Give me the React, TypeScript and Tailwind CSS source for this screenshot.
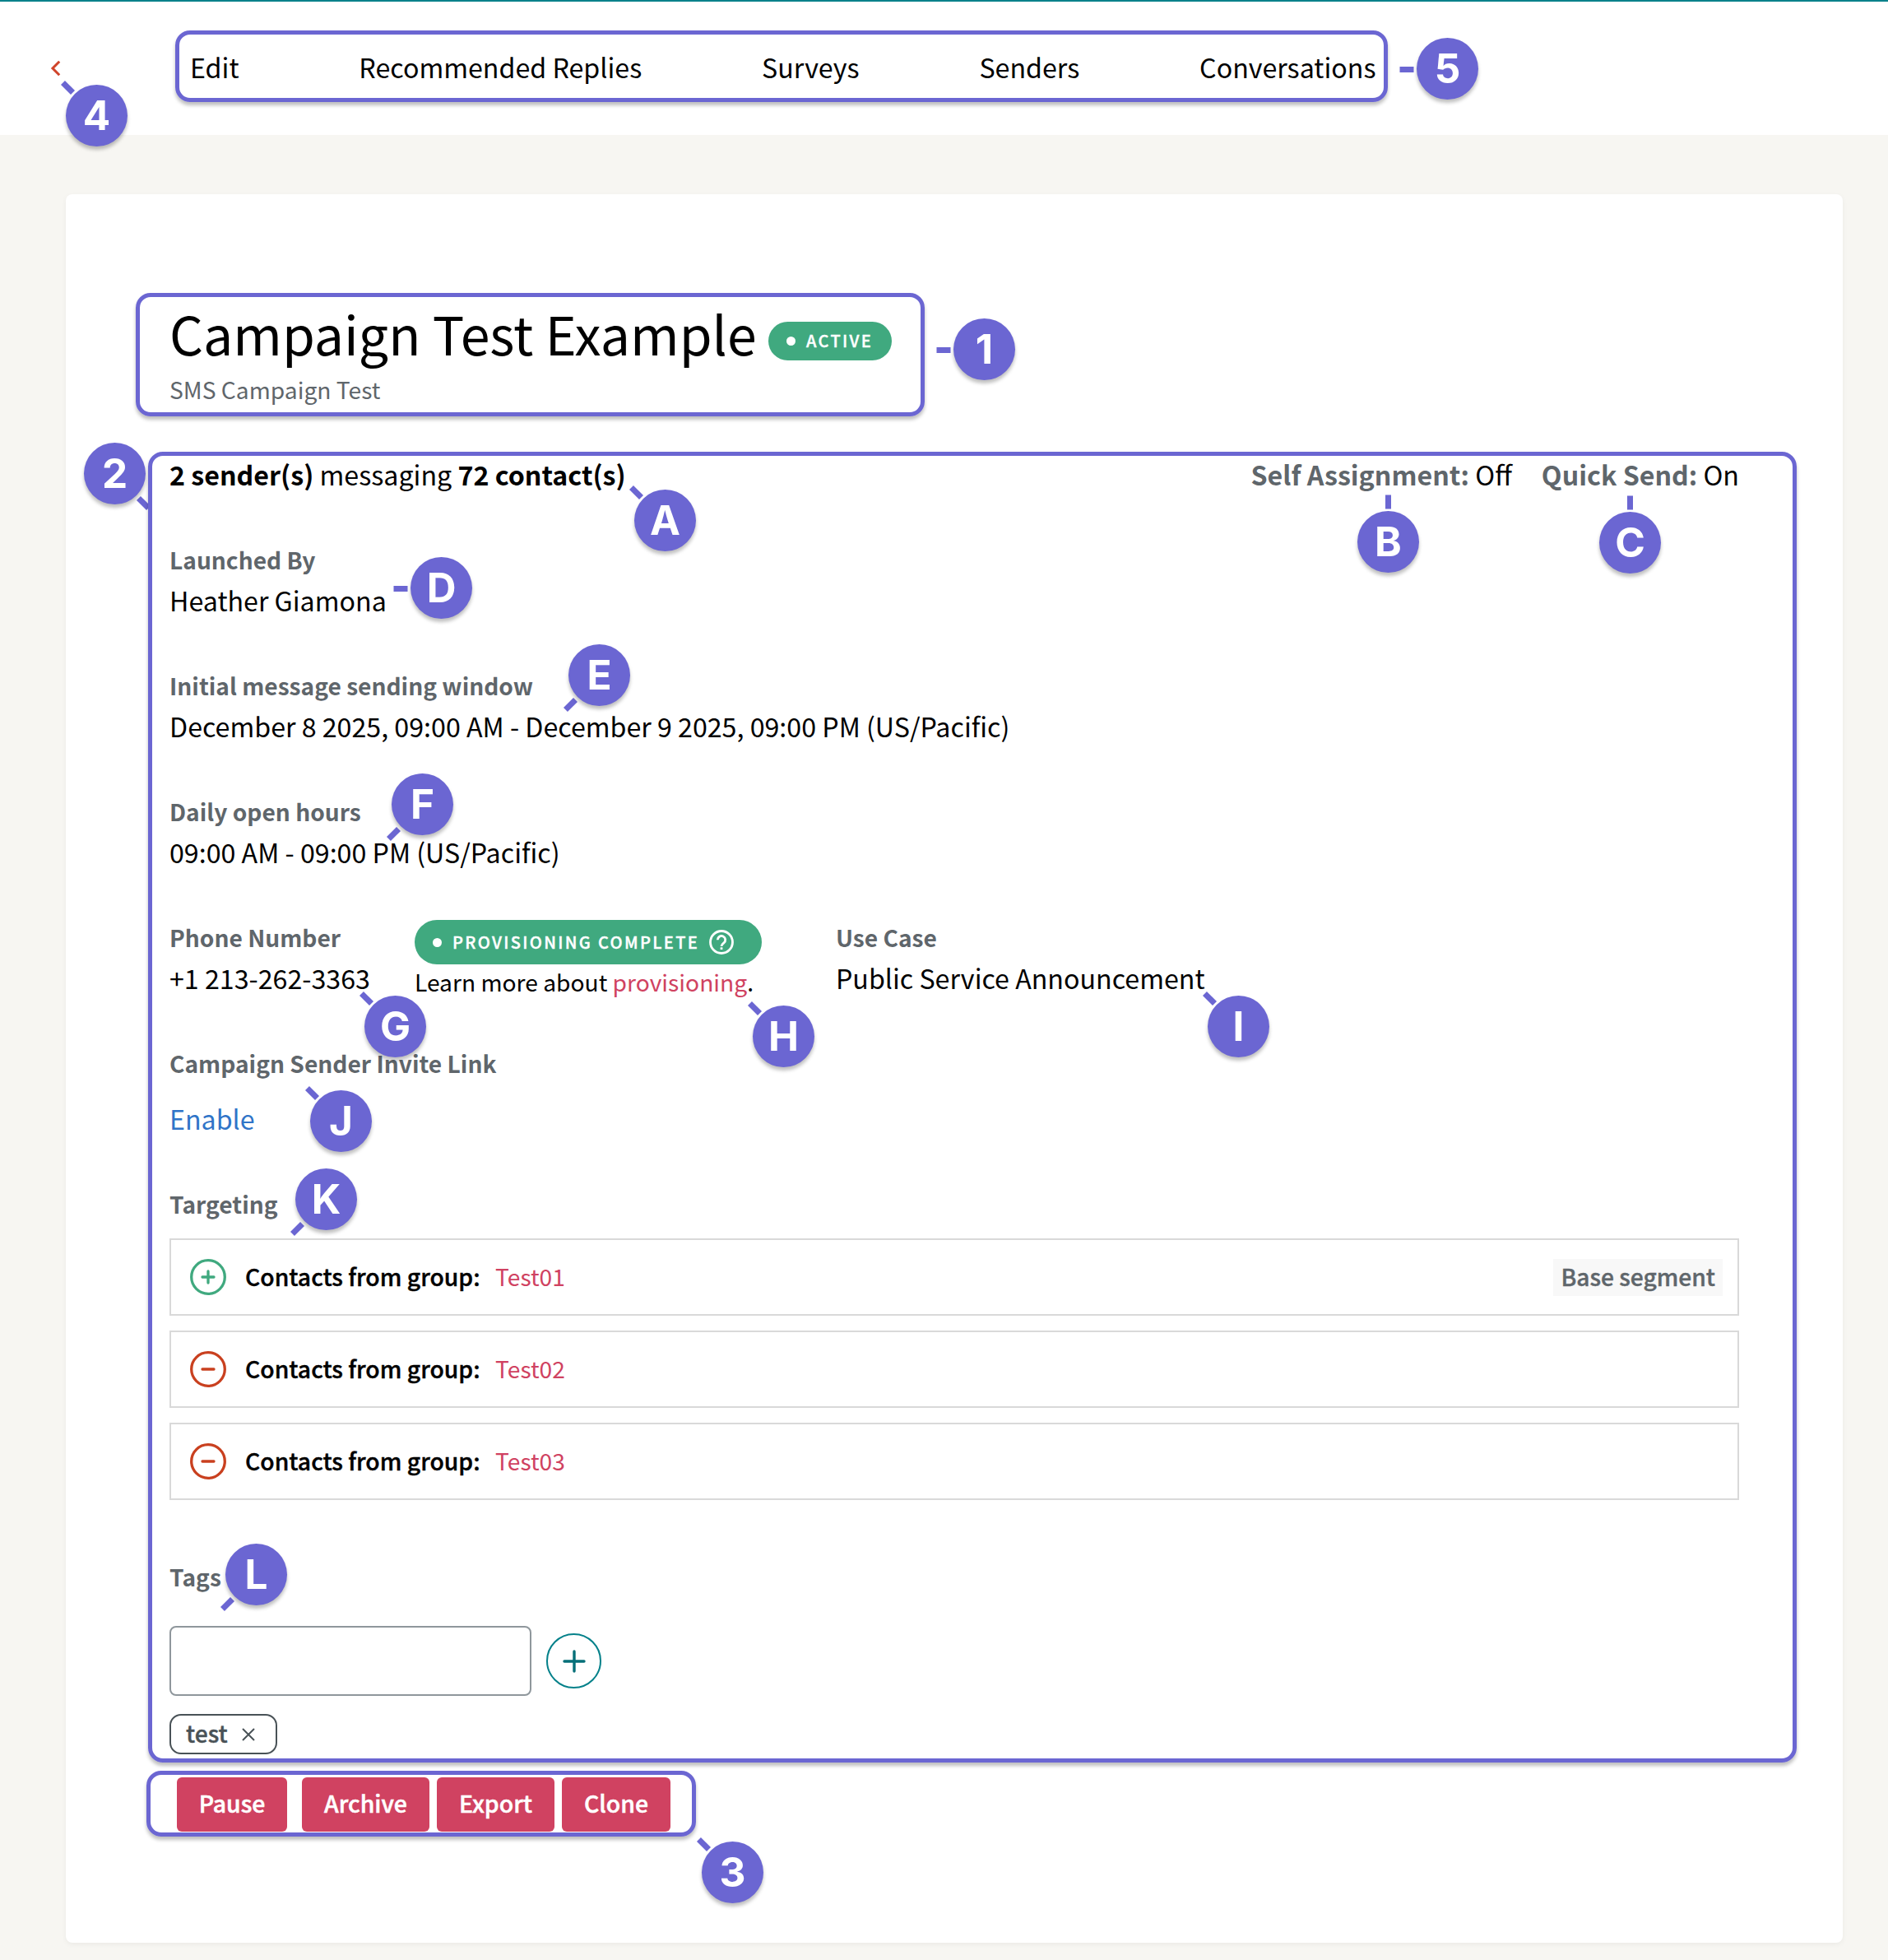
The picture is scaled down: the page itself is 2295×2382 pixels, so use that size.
import type { ReactNode } from "react";

const navItems = ["Edit", "Recommended Replies", "Surveys", "Senders", "Conversations"];

const segments = [
  { name: "Test01", included: true, base: true },
  { name: "Test02", included: false, base: false },
  { name: "Test03", included: false, base: false },
];

// x / y are the centre of the marker, angle is where its pointer sits
const markers = [
  { label: "4", x: 117.5, y: 140.5, angle: 225 },
  { label: "5", x: 1759.5, y: 83.5, angle: 180 },
  { label: "1", x: 1196.5, y: 424.5, angle: 180 },
  { label: "2", x: 139.5, y: 575.5, angle: 45 },
  { label: "A", x: 808.5, y: 632.5, angle: 225 },
  { label: "B", x: 1687.5, y: 658.5, angle: 270 },
  { label: "C", x: 1981.5, y: 659.5, angle: 270 },
  { label: "D", x: 536.5, y: 714.5, angle: 180 },
  { label: "E", x: 728.5, y: 820.5, angle: 135 },
  { label: "F", x: 513.5, y: 977.5, angle: 135 },
  { label: "G", x: 480.5, y: 1247.5, angle: 225 },
  { label: "H", x: 952.5, y: 1259.5, angle: 225 },
  { label: "I", x: 1505.5, y: 1247.5, angle: 225 },
  { label: "J", x: 414.5, y: 1362.5, angle: 225 },
  { label: "K", x: 396.5, y: 1457.5, angle: 135 },
  { label: "L", x: 311.5, y: 1913.5, angle: 135 },
  { label: "3", x: 890.5, y: 2275.5, angle: 225 },
];

export default function App() {
  return (
    <main className="relative h-[2382px] w-[2295px] overflow-hidden bg-[#f7f6f2] font-['Noto_Sans_CJK_SC',sans-serif] text-[32.2px] leading-[48px] text-black">
      <header className="flex h-[164px] items-start border-t-2 border-[#05818a] bg-white">
        <svg className="mt-[71px] ml-[61px] h-5 w-3.5" viewBox="0 0 14 20" fill="none">
          <path d="M11.2 1.8 3 10l8.2 8.2" stroke="#d0442a" strokeWidth="3" />
        </svg>
        <nav className="mt-[55px] ml-[156px] flex gap-[145.8px] whitespace-nowrap">
          {navItems.map((item) => (
            <a key={item}>{item}</a>
          ))}
        </nav>
      </header>

      <section className="mt-[72px] ml-20 h-[2125px] w-[2160px] rounded-lg bg-white px-[126px] pt-[128px] shadow-[0_2px_6px_rgba(0,0,0,0.05)]">
        <div className="flex h-20 items-center whitespace-nowrap">
          <h1 className="w-[728px] text-[64.4px] leading-[80px]">Campaign Test Example</h1>
          <div className="mt-[21px] flex h-[47px] w-[150px] items-center rounded-full bg-[#40a97f] pl-[22px] text-white">
            <Dot />
            <BadgeText>ACTIVE</BadgeText>
          </div>
        </div>
        <p className="mt-[7px] text-[28.2px] leading-[44px] text-[#5f666b]">SMS Campaign Test</p>

        <div className="mt-[57px] flex justify-between whitespace-nowrap">
          <p>
            <b>2 sender(s)</b> messaging <b>72 contact(s)</b>
          </p>
          <div className="flex gap-9">
            <p>
              <b className="text-[#5f666b]">Self Assignment:</b> Off
            </p>
            <p>
              <b className="text-[#5f666b]">Quick Send:</b> On
            </p>
          </div>
        </div>

        <div className="mt-[55px] flex flex-col gap-[55px] whitespace-nowrap">
          <Field label="Launched By">Heather Giamona</Field>
          <Field label="Initial message sending window">
            December 8 2025, 09:00 AM - December 9 2025, 09:00 PM (US/Pacific)
          </Field>
          <Field label="Daily open hours">09:00 AM - 09:00 PM (US/Pacific)</Field>

          <div className="flex">
            <div className="w-[298px]">
              <Field label="Phone Number">+1 213-262-3363</Field>
            </div>
            <div className="w-[512px] pt-1">
              <div className="flex h-[54px] w-[422px] items-center rounded-full bg-[#40a97f] pl-[22px] text-white">
                <Dot />
                <BadgeText>PROVISIONING COMPLETE</BadgeText>
                <HelpIcon />
              </div>
              <p className="-mt-px h-0 text-[28.2px] leading-[44px]">
                Learn more about <a className="text-[#d04261]">provisioning</a>.
              </p>
            </div>
            <Field label="Use Case">Public Service Announcement</Field>
          </div>

          <div>
            <FieldLabel>Campaign Sender Invite Link</FieldLabel>
            <a className="mt-[18px] block text-[#2f74c8]">Enable</a>
          </div>
        </div>

        <div className="mt-[55px]">
          <FieldLabel>Targeting</FieldLabel>
          <ul className="mt-[17px] flex flex-col gap-[18px]">
            {segments.map((segment) => (
              <li
                key={segment.name}
                className="flex h-[94px] items-center border-2 border-[#d9d9d9] pr-[18px] pl-[23px] text-[28.2px]"
              >
                <SegmentIcon included={segment.included} />
                <span className="-mt-0.5 ml-[23px] w-[304px] text-[28.3px] font-medium [-webkit-text-stroke:0.4px]">
                  Contacts from group:
                </span>
                <a className="-mt-0.5 text-[#d04261]">{segment.name}</a>
                {segment.base && (
                  <span className="ml-auto h-[45px] bg-[#f8f8f8] px-[9px] leading-[42px] font-medium text-[#5f666b] [-webkit-text-stroke:0.4px]">
                    Base segment
                  </span>
                )}
              </li>
            ))}
          </ul>
        </div>

        <div className="mt-[68px]">
          <FieldLabel>Tags</FieldLabel>
          <div className="mt-[35px] flex items-center gap-[18px]">
            <input className="h-[85px] w-[440px] rounded-lg border-2 border-[#8f979c] px-4" />
            <button className="flex size-[67px] items-center justify-center rounded-full border-2 border-[#05818a]">
              <svg
                className="size-7"
                viewBox="0 0 28 28"
                stroke="#056f78"
                strokeWidth="3.4"
                strokeLinecap="round"
              >
                <path d="M14 2v24M2 14h24" />
              </svg>
            </button>
          </div>
          <div className="mt-[22px] flex h-[49px] w-[131px] items-center rounded-[14px] border-2 border-[#495257] pl-[18px] text-[28.2px] font-medium text-[#495257]">
            <span className="-mt-[3px] [-webkit-text-stroke:0.4px]">test</span>
            <svg className="ml-[17px] size-4" viewBox="0 0 16 16" stroke="#495257" strokeWidth="2">
              <path d="M1 1l14 14M15 1 1 15" />
            </svg>
          </div>
        </div>

        <div className="mt-7 ml-[9px] flex text-[28.4px] font-medium text-white">
          <ActionButton className="mr-[18px] w-[134px]">Pause</ActionButton>
          <ActionButton className="mr-[9px] w-[155px]">Archive</ActionButton>
          <ActionButton className="mr-[9px] w-[143px]">Export</ActionButton>
          <ActionButton className="w-[132px]">Clone</ActionButton>
        </div>
      </section>

      {/* annotations drawn over the page */}
      <div className="pointer-events-none absolute inset-0">
        <Outline className="top-[37px] left-[213px] h-[87px] w-[1474px]" />
        <Outline className="top-[356px] left-[165px] h-[150px] w-[959px]" />
        {markers.map((marker) => (
          <Marker key={marker.label} {...marker} />
        ))}
        <Outline className="top-[549px] left-[180px] h-[1593px] w-[2004px]" />
        <Outline className="top-[2152px] left-[178px] h-20 w-[668px]" />
      </div>
    </main>
  );
}

function FieldLabel({ children }: { children: ReactNode }) {
  return <h2 className="text-[28.15px] leading-[50px] font-bold text-[#5f666b]">{children}</h2>;
}

function Field({ label, children }: { label: string; children: ReactNode }) {
  return (
    <div>
      <FieldLabel>{label}</FieldLabel>
      <p>{children}</p>
    </div>
  );
}

function ActionButton({ className, children }: { className: string; children: ReactNode }) {
  return (
    <button
      className={`h-[66px] rounded-md bg-[#d04261] pb-1 [-webkit-text-stroke:0.5px] ${className}`}
    >
      {children}
    </button>
  );
}

function Dot() {
  return <span className="size-[11px] rounded-full bg-white" />;
}

function BadgeText({ children }: { children: ReactNode }) {
  return (
    <span className="-mt-px ml-[13px] text-[20px] leading-none font-medium tracking-[2.35px] [-webkit-text-stroke:0.4px]">
      {children}
    </span>
  );
}

function HelpIcon() {
  return (
    <svg className="ml-3 size-[30px]" viewBox="0 0 30 30" fill="none" stroke="white" strokeWidth="2.8">
      <circle cx="15" cy="15" r="13.5" />
      <path d="M10.3 12.2a4.7 4.7 0 1 1 7.6 3.7c-1.7 1.3-2.9 2.1-2.9 4" />
      <path d="M15 21.3v2.7" />
    </svg>
  );
}

function SegmentIcon({ included }: { included: boolean }) {
  return (
    <svg
      className="size-11"
      viewBox="0 0 44 44"
      fill="none"
      stroke={included ? "#40a97f" : "#c9401f"}
      strokeWidth="3.3"
      strokeLinecap="round"
    >
      <circle cx="22" cy="22" r="20.3" />
      <path d={included ? "M15 22h14M22 15v14" : "M15 22h14"} />
    </svg>
  );
}

function Outline({ className }: { className: string }) {
  return (
    <div
      className={`absolute rounded-[18px] border-5 border-[#6b66d2] shadow-[0_4px_4px_rgba(0,0,0,0.25)] ${className}`}
    />
  );
}

function Marker({ label, x, y, angle }: { label: string; x: number; y: number; angle: number }) {
  return (
    <div className="absolute size-[75px]" style={{ left: x - 37.5, top: y - 37.5 }}>
      <svg className="absolute -top-[29px] -left-[30px] size-[135px]" viewBox="0 0 135 135">
        <rect
          x="108.5"
          y="64"
          width="17"
          height="7"
          fill="#6b66d2"
          transform={`rotate(${angle} 67.5 67.5)`}
        />
      </svg>
      <div className="relative flex size-full items-center justify-center rounded-full bg-[#6b66d2] font-[Inter,sans-serif] text-[49.5px] leading-none font-bold text-white shadow-[0_4px_4px_rgba(0,0,0,0.25)]">
        {label}
      </div>
    </div>
  );
}
